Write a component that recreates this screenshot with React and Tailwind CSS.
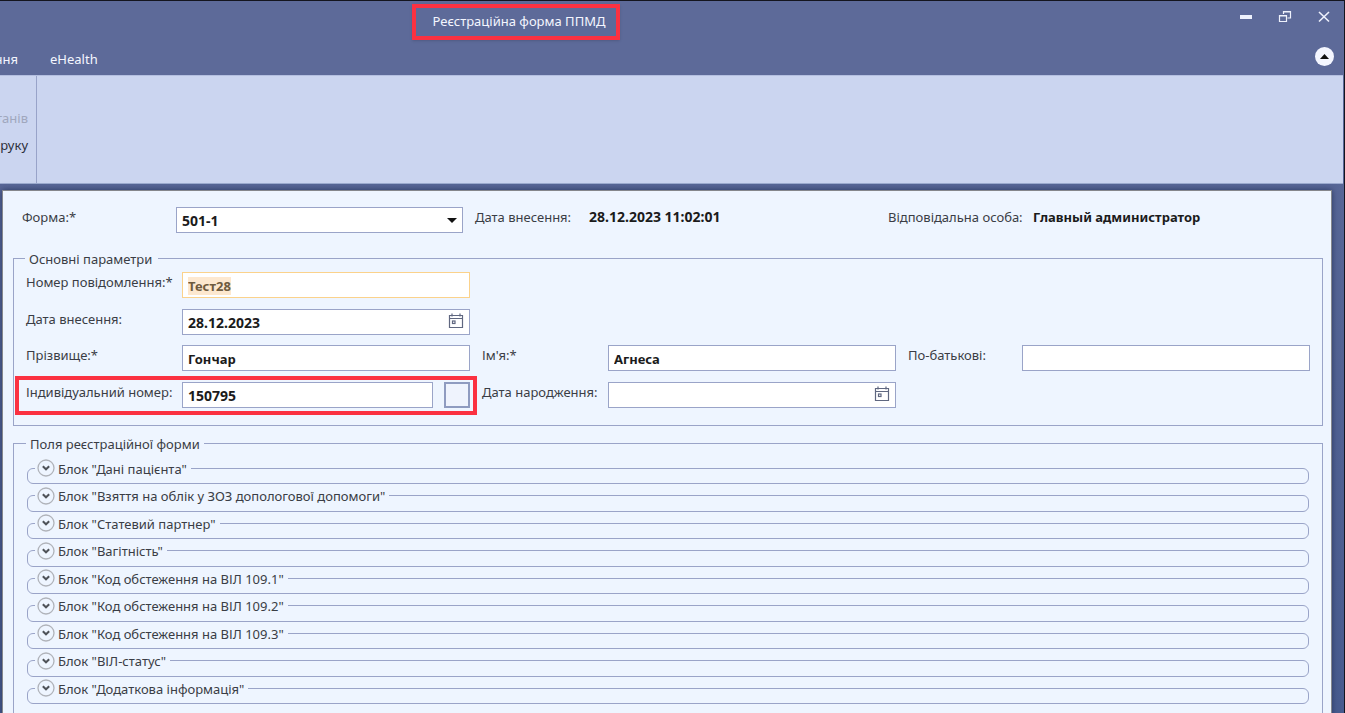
import { useEffect, useRef } from 'react'

const blocks = [
  'Блок "Дані пацієнта"',
  'Блок "Взяття на облік у ЗОЗ допологової допомоги"',
  'Блок "Статевий партнер"',
  'Блок "Вагітність"',
  'Блок "Код обстеження на ВІЛ 109.1"',
  'Блок "Код обстеження на ВІЛ 109.2"',
  'Блок "Код обстеження на ВІЛ 109.3"',
  'Блок "ВІЛ-статус"',
  'Блок "Додаткова інформація"',
]

const fieldClass = 'h-[26px] w-full min-w-0 border border-[#9aa4c8] bg-white px-[5px] pt-[2px] font-bold text-[#1b1b1b] outline-none'

function CalendarIcon() {
  return (
    <svg width="16" height="16" viewBox="0 0 16 16" fill="none" stroke="#5f6780" strokeWidth="1.2">
      <path d="M1.5 2.5h13v12h-13zM1.5 5.500h13M4 0.5v3M12 0.5v3" />
      <rect x="4.500" y="8" width="2.500" height="2.500" />
    </svg>
  )
}

function DateField({ id, value }) {
  return (
    <div className="flex h-[26px] border border-[#9aa4c8] bg-white">
      <input id={id} defaultValue={value} className="min-w-0 flex-1 px-[5px] pt-[2px] text-sm font-bold text-[#1b1b1b] outline-none" />
      <button type="button" aria-label="Календар" className="flex w-[26px] items-center justify-center pb-px">
        <CalendarIcon />
      </button>
    </div>
  )
}

function WindowButtons() {
  return (
    <div className="flex gap-[23px] pt-[7px] pr-3">
      <button type="button" aria-label="Згорнути" className="h-4 w-4">
        <svg width="16" height="16" viewBox="0 0 16 16">
          <rect x="2" y="7" width="12" height="4" fill="#eef1fc" />
        </svg>
      </button>
      <button type="button" aria-label="Відновити" className="h-4 w-4">
        <svg width="16" height="16" viewBox="0 0 16 16" fill="none" stroke="#eef1fc" strokeWidth="1.2">
          <path d="M6.500 6V3.500h7v6.500h-3M6 4h8" />
          <path d="M2.500 7.500h7v6h-7zM2 8h8" />
        </svg>
      </button>
      <button type="button" aria-label="Закрити" className="h-4 w-4">
        <svg width="16" height="16" viewBox="0 0 16 16" fill="none" stroke="#eef1fc" strokeWidth="1.6">
          <path d="M3 4l10 9.500M13 4L3 13.500" />
        </svg>
      </button>
    </div>
  )
}

function Header() {
  return (
    <header className="h-[74px] shrink-0 bg-[#5d6a99] text-[#f4f6ff]">
      <div className="flex h-10 items-start justify-between">
        <h1 className="mt-[3px] ml-[412px] flex h-9 w-[208px] items-center justify-center border-4 border-[#fb3141] pb-[2px] pl-[6px] shadow-sm">
          Реєстраційна форма ППМД
        </h1>
        <WindowButtons />
      </div>
      <div className="flex h-[34px] items-center pr-[10px]">
        <nav className="flex flex-1 gap-8 pt-px">
          <button type="button" className="flex w-[18px] justify-end overflow-hidden">
            <span>ння</span>
          </button>
          <button type="button">eHealth</button>
        </nav>
        <button type="button" aria-label="Згорнути стрічку" className="mb-1 flex h-[19px] w-[19px] items-center justify-center rounded-full bg-[#f4f6ff]">
          <svg width="9" height="5" viewBox="0 0 9 5">
            <path d="M0 5L4.500 0L9 5z" fill="#111" />
          </svg>
        </button>
      </div>
    </header>
  )
}

function Ribbon() {
  return (
    <div className="mr-px h-[109px] shrink-0 border-t border-b border-t-[#b4bfe0] border-b-[#9dabd0] bg-[#cbd5f0]">
      <div className="flex h-full w-[37px] flex-col items-end gap-[7px] overflow-hidden border-r border-[#98a3c9] pt-8 pr-2">
        <button type="button" disabled className="whitespace-nowrap text-[#a0a7bd]">танів</button>
        <button type="button" className="whitespace-nowrap text-[#2c2f3a]">руку</button>
      </div>
    </div>
  )
}

function FormHead() {
  return (
    <div className="grid grid-cols-[154px_287px_126px_1fr_145px_290px] pl-[9px]">
      <label htmlFor="form">Форма:*</label>
      <div className="relative">
        <select id="form" className="h-[26px] w-full appearance-none border border-[#9aa4c8] bg-white px-[5px] pt-[2px] text-sm font-bold text-[#1b1b1b]">
          <option>501-1</option>
        </select>
        <svg className="pointer-events-none absolute top-[11px] right-[6px]" width="10" height="5" viewBox="0 0 10 5">
          <path d="M0 0h10L5 5z" fill="#111" />
        </svg>
      </div>
      <span className="pl-3">Дата внесення:</span>
      <span className="text-sm font-bold text-[#1b1b1b]">28.12.2023 11:02:01</span>
      <span>Відповідальна особа:</span>
      <span className="font-bold text-[#1b1b1b]">Главный администратор</span>
    </div>
  )
}

function MainParams() {
  const numberRef = useRef(null)

  useEffect(() => {
    numberRef.current.focus()
    numberRef.current.select()
  }, [])

  return (
    <fieldset className="h-[177px] border border-[#9aa4c8] px-3">
      <legend className="-ml-px h-[18px] pr-[6px] pl-1 leading-5">Основні параметри</legend>
      <div className="mt-[5px] grid h-[136px] grid-cols-[156px_1fr_138px_1fr_126px_1fr] content-between">
        <label htmlFor="msg">Номер повідомлення:*</label>
        <input
          id="msg"
          ref={numberRef}
          defaultValue="Тест28"
          className="h-[26px] w-full min-w-0 border border-[#fbd28b] bg-white px-[5px] pt-[2px] font-bold text-[#6f5b3e] outline-none selection:bg-[#fde8cf] selection:text-[#6f5b3e]"
        />

        <label htmlFor="entered" className="col-start-1">Дата внесення:</label>
        <DateField id="entered" value="28.12.2023" />

        <label htmlFor="surname" className="col-start-1">Прізвище:*</label>
        <input id="surname" defaultValue="Гончар" className={fieldClass} />
        <label htmlFor="name" className="pl-3">Ім'я:*</label>
        <input id="name" defaultValue="Агнеса" className={fieldClass} />
        <label htmlFor="patronymic" className="pl-3">По-батькові:</label>
        <input id="patronymic" className={fieldClass} />

        <div className="relative col-span-2 grid grid-cols-[156px_1fr]">
          <label htmlFor="personal">Індивідуальний номер:</label>
          <div className="flex gap-[11px]">
            <input id="personal" defaultValue="150795" className={`${fieldClass} text-sm`} />
            <button type="button" aria-label="Вибрати" className="h-[26px] w-[26px] shrink-0 border-2 border-[#8f9bc0] bg-[#eff3fd]" />
          </div>
          {/* highlight frame */}
          <div className="pointer-events-none absolute -top-[6px] -right-[7px] -bottom-[7px] -left-[11px] border-4 border-[#fb3141]" />
        </div>
        <label htmlFor="birth" className="pl-3">Дата народження:</label>
        <DateField id="birth" />
      </div>
    </fieldset>
  )
}

function Block({ title }) {
  return (
    <fieldset className="h-[25px] rounded-md border border-[#9aa4c8] pl-[7px]">
      <legend className="h-[18px] pr-1 pl-[2px]">
        <button type="button" className="flex h-[18px] items-center gap-[3px]">
          <svg width="18" height="18" viewBox="0 0 18 18" fill="none">
            <circle cx="9" cy="9" r="8" stroke="#b0b3ba" strokeWidth="1.3" />
            <path d="M5.800 7.300L9 10.300L12.200 7.300" stroke="#4f5359" strokeWidth="2" />
          </svg>
          <span className="pt-px">{title}</span>
        </button>
      </legend>
    </fieldset>
  )
}

export default function App() {
  return (
    <div className="flex h-screen flex-col overflow-hidden border-t border-r border-[#14151f] bg-linear-to-b from-[#5d6a99] to-[#485b8f] font-['Noto_Sans',sans-serif] text-[13px] leading-5 text-[#3a3d45]">
      <Header />
      <Ribbon />
      <main className="mt-[6px] mr-3 ml-[2px] flex-1 border-x border-t border-[#85878c] bg-[#eef5ff] pt-4 pr-2 pl-[10px] shadow-[0_0_6px_#2b3860]">
        <FormHead />
        <div className="mt-4">
          <MainParams />
        </div>
        <fieldset className="mt-2 h-[320px] border border-[#9aa4c8] px-[13px]">
          <legend className="-ml-px h-[18px] px-1 leading-5">Поля реєстраційної форми</legend>
          <div className="mt-[7px] flex h-[245px] flex-col justify-between">
            {blocks.map((title) => (
              <Block key={title} title={title} />
            ))}
          </div>
        </fieldset>
      </main>
    </div>
  )
}
